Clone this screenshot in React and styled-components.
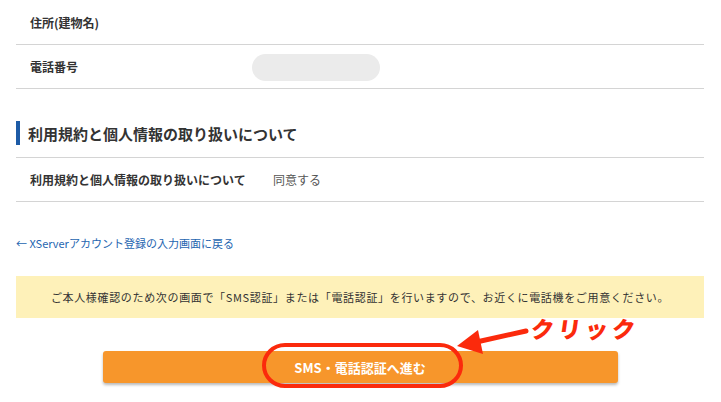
import React from 'react';
import styled, { createGlobalStyle } from 'styled-components';

const GlobalStyle = createGlobalStyle`
  html, body {
    margin: 0;
    padding: 0;
    background: #fff;
  }
  body {
    font-family: "Noto Sans CJK JP", "Noto Sans", sans-serif;
    color: #333;
  }
`;

const Page = styled.div`
  position: relative;
  width: 721px;
  height: 402px;
  overflow: hidden;
  padding: 1px 17px 0 16px;
  box-sizing: border-box;
`;

const Table = styled.div`
  border-top: ${(p) => (p.$top ? '1px solid #d4d4d4' : 'none')};
`;

const Row = styled.div`
  display: grid;
  grid-template-columns: ${(p) => p.$labelWidth}px 1fr;
  align-items: center;
  height: 43px;
  border-bottom: 1px solid #d4d4d4;
  padding-left: 14px;
`;

const Label = styled.div`
  font-size: 12px;
  font-weight: 700;
  color: #333;
`;

const Value = styled.div`
  font-size: 12px;
  color: #555;
`;

const Pill = styled.div`
  width: 128px;
  height: 27px;
  border-radius: 14px;
  background: #ebebeb;
  margin-top: 2px;
`;

const Heading = styled.h2`
  margin: 32px 0 12px;
  height: 24px;
  display: flex;
  align-items: center;
  border-left: 4px solid #1d5ba6;
  padding-left: 8px;
  font-size: 15px;
  font-weight: 700;
  color: #333;
  line-height: 1;
`;

const BackLink = styled.a`
  display: block;
  margin-top: 33px;
  line-height: 16px;
  font-size: 11px;
  color: #2565b0;
  text-decoration: none;
`;

const Notice = styled.div`
  margin-top: 25px;
  height: 42px;
  display: flex;
  align-items: center;
  justify-content: center;
  background: #fef1b9;
  font-size: 11px;
  letter-spacing: 0.06em;
  color: #333;
`;

const ButtonRow = styled.div`
  display: flex;
  justify-content: center;
  margin-top: 33px;
`;

const SubmitButton = styled.button`
  width: 515px;
  height: 32px;
  border: none;
  border-radius: 3px;
  background: #f7962b;
  color: #fff;
  font-family: inherit;
  font-size: 13px;
  font-weight: 700;
  box-shadow: 0 2px 3px rgba(0, 0, 0, 0.28);
`;

const Overlay = styled.svg`
  position: absolute;
  left: 0;
  top: 0;
  pointer-events: none;
`;

const ClickLabel = styled.span`
  position: absolute;
  left: 531px;
  top: 314px;
  font-size: 23px;
  font-weight: 900;
  letter-spacing: 4px;
  color: #fb2a0c;
  transform: skewX(-8deg);
  line-height: 1.3;
`;

export default function App() {
  return (
    <>
      <GlobalStyle />
      <Page>
        <Table>
          <Row $labelWidth={222}>
            <Label>住所(建物名)</Label>
          </Row>
          <Row $labelWidth={222}>
            <Label>電話番号</Label>
            <Pill />
          </Row>
        </Table>

        <Heading>利用規約と個人情報の取り扱いについて</Heading>
        <Table $top>
          <Row $labelWidth={243}>
            <Label>利用規約と個人情報の取り扱いについて</Label>
            <Value>同意する</Value>
          </Row>
        </Table>

        <BackLink href="#">← XServerアカウント登録の入力画面に戻る</BackLink>

        <Notice>
          ご本人様確認のため次の画面で「SMS認証」または「電話認証」を行いますので、お近くに電話機をご用意ください。
        </Notice>

        <ButtonRow>
          <SubmitButton>SMS・電話認証へ進む</SubmitButton>
        </ButtonRow>

        <Overlay width="721" height="402" viewBox="0 0 721 402">
          <rect x="264" y="345" width="197" height="41" rx="21" fill="none" stroke="#fb2a0c" strokeWidth="4" />
          <line x1="526" y1="331" x2="472" y2="343" stroke="#fb2a0c" strokeWidth="5" strokeLinecap="round" />
          <polygon points="457,346 478,330 483,354" fill="#fb2a0c" />
        </Overlay>
        <ClickLabel>クリック</ClickLabel>
      </Page>
    </>
  );
}
